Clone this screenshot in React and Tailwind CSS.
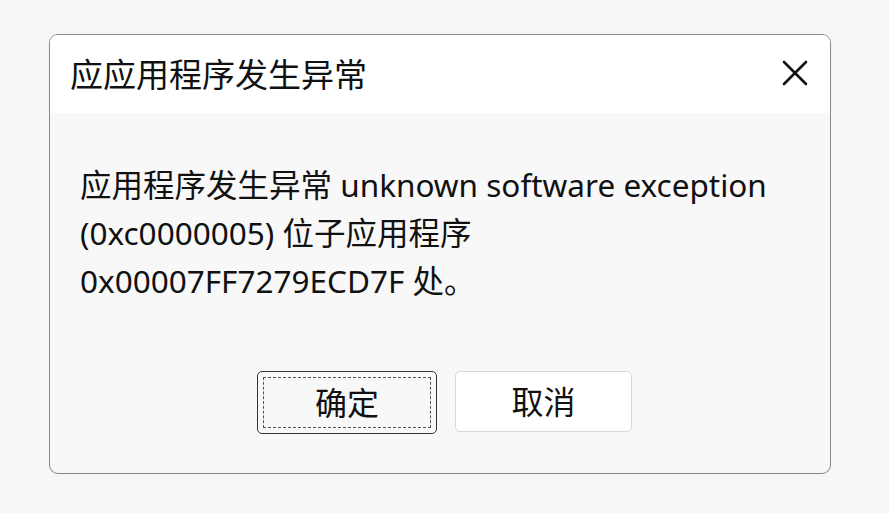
export default function App() {
  const font = { fontFamily: '"Noto Sans", "Noto Sans CJK SC", sans-serif' };
  return (
    <div className="w-[889px] h-[513px] bg-[#f6f6f6] pt-[34px] pl-[49px]" style={font}>
      <div className="w-[782px] h-[440px] rounded-[9px] border-[1.5px] border-[#888] overflow-hidden flex flex-col bg-[#f8f8f8]">
        <div className="h-[78px] bg-white flex items-center justify-between pl-[20px] pr-[22px]">
          <div className="text-[33px] text-[#111] leading-none">应应用程序发生异常</div>
          <svg width="26" height="26" viewBox="0 0 26 26" className="mt-[-2px]">
            <path d="M2 2 L24 24 M24 2 L2 24" stroke="#111" strokeWidth="2.6" strokeLinecap="round" />
          </svg>
        </div>
        <div className="flex-1 flex flex-col pl-[30px] pt-[48px]">
          <div className="text-[31.5px] leading-[48px] text-[#111]">
            <div>应用程序发生异常 unknown software exception</div>
            <div>(0xc0000005) 位子应用程序</div>
            <div>0x00007FF7279ECD7F 处。</div>
          </div>
          <div className="flex gap-[18px] ml-[177px] mt-[66px]">
            <button className="w-[180px] h-[63px] rounded-[5px] border-[1.5px] border-[#333] bg-[#f8f8f8] p-[5px]">
              <div className="w-full h-full border border-dashed border-[#555] flex items-center justify-center text-[32px] text-[#111]">确定</div>
            </button>
            <button className="w-[177px] h-[61px] rounded-[5px] border-[1.5px] border-[#d8d8d8] bg-white flex items-center justify-center text-[32px] text-[#111]">取消</button>
          </div>
        </div>
      </div>
    </div>
  );
}
